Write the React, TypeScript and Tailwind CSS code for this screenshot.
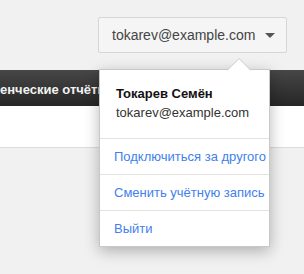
import React from 'react';

// Account switcher dropdown opened from the top bar

const items = ['Подключиться за другого', 'Сменить учётную запись', 'Выйти'];

export default function App() {
    return (
        <div
            className="relative h-[274px] w-[304px] overflow-hidden bg-[#f1f1f1] text-[13px]"
            style={{ fontFamily: '"Liberation Sans", Arial, sans-serif' }}
        >
            {/* Top header with account button */}
            <div className="flex h-[70px] items-start justify-end bg-[#f1f1f1] pr-[17px] pt-[17px]">
                <button className="flex h-[36px] w-[189px] items-center justify-between rounded-[2px] border border-[#d6d6d6] bg-[#f5f5f5] pl-[13px] pr-[11px] text-[14px] text-[#444]">
                    <span>tokarev@example.com</span>
                    <svg width="10" height="5" viewBox="0 0 10 5">
                        <path d="M0 0 L10 0 L5 5 Z" fill="#555" />
                    </svg>
                </button>
            </div>

            {/* Dark nav bar */}
            <div className="flex h-[36px] items-center bg-gradient-to-b from-[#474747] to-[#262626] pt-[3px]">
                <span className="whitespace-nowrap font-bold text-[#f2f2f2]">енческие отчёты</span>
            </div>

            {/* White content strip */}
            <div className="h-[42px] border-b border-[#dcdcdc] bg-white" />

            {/* Dropdown */}
            <div className="absolute left-[99px] top-[69px] w-[171px] border border-[#c8c8c8] bg-white shadow-[0_4px_14px_rgba(0,0,0,0.28)]">
                <svg className="absolute left-[127px] top-[-12px]" width="24" height="13" viewBox="0 0 24 13">
                    <path d="M0 12.5 L12 0.5 L24 12.5" fill="white" stroke="#c8c8c8" strokeWidth="1" />
                    <rect x="1" y="12" width="22" height="1" fill="white" />
                </svg>
                <div className="px-4 pb-[16px] pt-[14px] leading-[19px]">
                    <div className="font-bold text-[#111]">Токарев Семён</div>
                    <div className="text-[#333]">tokarev@example.com</div>
                </div>
                {items.map((item) => (
                    <div
                        key={item}
                        className="flex h-[36px] items-center whitespace-nowrap border-t border-[#e2e2e2] pl-[14px] text-[#427fed]"
                    >
                        {item}
                    </div>
                ))}
            </div>
        </div>
    );
}
